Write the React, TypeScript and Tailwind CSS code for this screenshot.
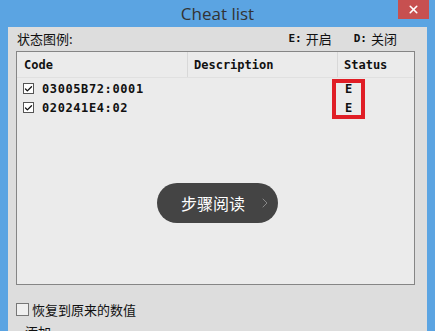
import { Check, ChevronRight, X } from "lucide-react";

const cjk = "font-['Noto_Sans_CJK_SC','Noto_Sans',sans-serif]";
const mono = "font-['DejaVu_Sans_Mono',monospace]";

const rows = [
  { code: "03005B72:0001", status: "E" },
  { code: "020241E4:02", status: "E" },
];

export default function App() {
  return (
    <div className="w-[435px] h-[331px] overflow-hidden bg-[#5ba4e2] flex flex-col relative">
      <div className="h-[27px] shrink-0 flex items-center justify-center relative">
        <span className="text-[17px] text-[#333] font-['Open_Sans',sans-serif] leading-none pb-[1px]">
          Cheat list
        </span>
        <div className="absolute right-[6px] top-0 w-[31px] h-[19px] bg-[#c75050] flex items-center justify-center">
          <X size={13} strokeWidth={3} className="text-white" />
        </div>
      </div>

      <div className="flex-1 mx-[8px] bg-[#dddddd] flex flex-col px-[8px]">
        <div className={`h-[24px] flex items-center text-[13px] text-[#111] ${cjk}`}>
          <span className="pl-[1px]">状态图例:</span>
          <span className="ml-auto flex items-center gap-[4px]">
            <span className={`${mono} font-bold text-[11px]`}>E:</span>开启
          </span>
          <span className="ml-[22px] mr-[22px] flex items-center gap-[4px]">
            <span className={`${mono} font-bold text-[11px]`}>D:</span>关闭
          </span>
        </div>

        <div className="h-[234px] mr-[4px] border border-[#858585] bg-[#ebebeb] flex flex-col relative">
          <div className={`h-[26px] flex border-b border-[#e0e0e0] ${mono} font-bold text-[12px] text-[#111]`}>
            <div className="w-[171px] flex items-center pl-[7px] border-r border-[#d8d8d8]">Code</div>
            <div className="w-[150px] flex items-center pl-[6px] border-r border-[#d8d8d8]">Description</div>
            <div className="flex-1 flex items-center pl-[6px]">Status</div>
          </div>
          <div className="flex flex-col pt-[1px]">
            {rows.map((r) => (
              <div key={r.code} className={`h-[19px] flex items-center ${mono} font-bold text-[12px] text-[#111]`}>
                <div className="w-[171px] flex items-center pl-[6px] gap-[8px]">
                  <div className="w-[11px] h-[11px] border border-[#555] bg-white flex items-center justify-center">
                    <Check size={10} strokeWidth={3.5} className="text-[#111]" />
                  </div>
                  <span className="tracking-[0.6px]">{r.code}</span>
                </div>
                <div className="w-[150px]" />
                <div className="flex-1 pl-[7px]">{r.status}</div>
              </div>
            ))}
          </div>
          <div className="absolute left-[315px] top-[27px] w-[33px] h-[40px] border-[4px] border-[#e01e26]" />
          <div className="absolute left-[140px] top-[131px] w-[121px] h-[40px] rounded-full bg-[#444444] flex items-center pl-[24px] gap-[12px]">
            <span className={`text-white text-[16px] ${cjk}`}>步骤阅读</span>
            <ChevronRight size={16} strokeWidth={1.5} className="text-[#888]" />
          </div>
        </div>

        <div className={`mt-[15px] flex items-center gap-[3px] text-[13px] text-[#111] ${cjk}`}>
          <div className="w-[13px] h-[13px] border border-[#777] bg-[#f0f0f0]" />
          <span>恢复到原来的数值</span>
        </div>
        <div className={`mt-[2px] pl-[9px] text-[13px] text-[#111] ${cjk}`}>添加</div>
      </div>
    </div>
  );
}
